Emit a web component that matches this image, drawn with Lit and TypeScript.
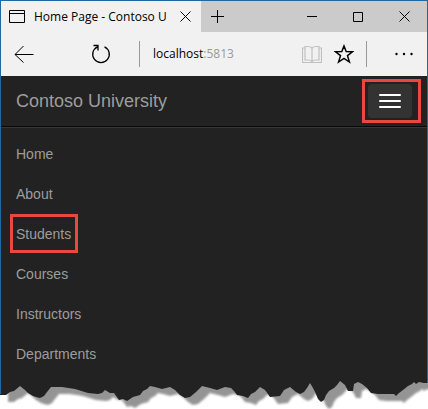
import { LitElement, html, css, svg } from "lit";
import { customElement } from "lit/decorators.js";

const LINKS = ["Home", "About", "Students", "Courses", "Instructors", "Departments"];

/** Browser chrome: tab strip and address bar. */
@customElement("browser-chrome")
export class BrowserChrome extends LitElement {
  static styles = css`
    :host {
      display: block;
      background: #f1f1f1;
      color: #000;
      font-family: "Open Sans", "Noto Sans", sans-serif;
    }
    button {
      display: grid;
      place-items: center;
      padding: 0;
      border: 0;
      background: none;
      color: inherit;
      flex: none;
    }
    svg {
      display: block;
      fill: none;
      stroke: currentColor;
    }
    .strip {
      display: flex;
      height: 31px;
      background: #cbcbcb;
    }
    .tab {
      display: flex;
      align-items: center;
      width: 200px;
      flex: none;
      box-sizing: border-box;
      padding-left: 8px;
      background: #f1f1f1;
    }
    .title {
      flex: 1;
      margin-left: 9px;
      white-space: nowrap;
      font-size: 12px;
      line-height: 20px;
    }
    .close {
      width: 32px;
      height: 31px;
    }
    .new {
      width: 34px;
    }
    .controls {
      display: flex;
      margin-left: auto;
    }
    .controls button {
      width: 46px;
    }
    .bar {
      display: flex;
      align-items: center;
      height: 44px;
    }
    .back {
      width: 46px;
      height: 44px;
    }
    .reload {
      width: 46px;
      height: 44px;
      margin-left: 31px;
    }
    .rule {
      width: 1px;
      height: 26px;
      flex: none;
      background: #999;
    }
    .left {
      margin-left: 15px;
    }
    .address {
      flex: 1;
      min-width: 0;
      padding-left: 13px;
      font-size: 12px;
      line-height: 20px;
      white-space: nowrap;
    }
    .port {
      color: #999;
    }
    .book,
    .star {
      width: 32px;
      height: 44px;
    }
    .book {
      color: #c0c0c0;
    }
    .right {
      margin-left: 6px;
    }
    .more {
      width: 46px;
      height: 44px;
      margin-left: 14px;
    }
    .more svg {
      fill: currentColor;
      stroke: none;
    }
  `;

  render() {
    return html`
      <div class="strip">
        <div class="tab">
          <svg width="16" height="13" viewBox="0 0 16 13">
            <path d="M.5.5h15v12H.5zM.5 3.5h15" />
          </svg>
          <span class="title">Home Page - Contoso U</span>
          <button class="close" aria-label="Close tab">
            <svg width="11" height="11" viewBox="0 0 11 11"><path d="M.5.5l10 10M10.5.5l-10 10" /></svg>
          </button>
        </div>
        <button class="new" aria-label="New tab">
          <svg width="14" height="13" viewBox="0 0 14 13"><path d="M0 6.5h13M6.5 0v13" /></svg>
        </button>
        <div class="controls">
          <button aria-label="Minimize">
            <svg width="10" height="10" viewBox="0 0 10 10"><path d="M0 4.5h10" /></svg>
          </button>
          <button aria-label="Maximize">
            <svg width="10" height="10" viewBox="0 0 10 10"><path d="M.5.5h9v9h-9z" /></svg>
          </button>
          <button aria-label="Close window">
            <svg width="11" height="11" viewBox="0 0 11 11"><path d="M.5.5l10 10M10.5.5l-10 10" /></svg>
          </button>
        </div>
      </div>
      <div class="bar">
        <button class="back" aria-label="Back">
          <svg width="20" height="18" viewBox="0 0 20 18"><path d="M1 9.500h18.500M9.500 1L1 9.500l8.500 8" /></svg>
        </button>
        <button class="reload" aria-label="Refresh">
          <svg width="20" height="20" viewBox="0 0 20 20" stroke-width="1.3">
            <path d="M13.500 2.800a8.300 8.300 0 1 1-7 0M2.500 1.500h4.500v5" />
          </svg>
        </button>
        <span class="rule left"></span>
        <span class="address">localhost<span class="port">:5813</span></span>
        <button class="book" aria-label="Reading view">
          <svg width="20" height="19" viewBox="0 0 20 19" stroke-width="1.2">
            <path d="M2.500 3H.5v14.500h19V3h-2M10 3v13.500M10 3Q8.500 1.500 6 1.500H3v13.500h3q2.500 0 4 1.500q1.500-1.500 4-1.500h3V1.500h-3Q11.500 1.500 10 3" />
          </svg>
        </button>
        <button class="star" aria-label="Add to favorites">
          <svg width="20" height="20" viewBox="0 0 20 20" stroke-width="1.5">
            <path d="M10 2l2.200 5.600 6.300.2-5 3.800 1.900 6.400L10 14.300 4.600 18l1.900-6.400-5-3.800 6.300-.2z" />
          </svg>
        </button>
        <span class="rule right"></span>
        <button class="more" aria-label="More">
          <svg width="18" height="4" viewBox="0 0 18 4">
            <circle cx="1.500" cy="2" r="1.200" /><circle cx="9" cy="2" r="1.200" /><circle cx="16.500" cy="2" r="1.200" />
          </svg>
        </button>
      </div>
    `;
  }
}

/** Collapsed site navigation with its menu opened. */
@customElement("site-nav")
export class SiteNav extends LitElement {
  static styles = css`
    :host {
      display: block;
      background: #222;
      font-family: "Liberation Sans", Arial, sans-serif;
    }
    a {
      color: #9d9d9d;
      text-decoration: none;
    }
    .header {
      display: flex;
      align-items: center;
      justify-content: space-between;
      height: 50px;
      padding: 0 6px 0 15px;
      border-bottom: 1px solid #090909;
    }
    .brand {
      font-size: 18px;
      line-height: 20px;
    }
    .mark {
      border: 3px solid #e8483f;
    }
    .toggler {
      padding: 2px 6px 2px 3px;
    }
    .toggle {
      display: flex;
      flex-direction: column;
      justify-content: center;
      align-items: center;
      gap: 4px;
      width: 44px;
      height: 34px;
      padding: 0;
      border: 0;
      border-radius: 4px;
      background: #333;
    }
    .line {
      width: 22px;
      height: 2px;
      border-radius: 1px;
      background: #fff;
    }
    ul {
      margin: 0;
      padding: 5px 9px;
      list-style: none;
      border-top: 1px solid #363636;
    }
    li {
      display: flex;
      align-items: center;
      height: 40px;
    }
    .link {
      padding: 7px 4px 6px 3px;
      border: 3px solid transparent;
      font-size: 14px;
      line-height: 20px;
    }
    .link.current {
      border-color: #e8483f;
    }
  `;

  render() {
    return html`
      <nav>
        <div class="header">
          <a class="brand" href="#">Contoso University</a>
          <div class="mark toggler">
            <button class="toggle" aria-label="Toggle navigation">
              <span class="line"></span><span class="line"></span><span class="line"></span>
            </button>
          </div>
        </div>
        <ul>
          ${LINKS.map(
            (name) => html`<li>
              <a class=${name === "Students" ? "link current" : "link"} href="#">${name}</a>
            </li>`
          )}
        </ul>
      </nav>
    `;
  }
}

const EDGE =
  "L428 5 424 5 419 4 416 6 414 4 412 6 408 8 403 12 399 15 396 18 394 16 378 16 371 15 367 10 362 6 358 4 354 6 353 13 348 13 345 7 340 3 337 7 334 10 329 13 326 17 324 22 321 24 318 21 315 14 313 10 310 5 307 10 304 14 300 16 296 14 290 9 284 12 280 18 270 19 265 12 260 9 255 14 251 16 248 20 243 18 237 17 234 13 231 10 225 9 217 12 210 10 202 8 196 14 190 19 185 20 180 17 175 12 170 9 162 11 155 9 150 8 147 11 143 13 140 17 133 19 127 23 123 21 119 22 114 15 110 15 105 12 102 15 98 16 88 15 75 11 62 9 51 9 47 14 44 18 40 20 36 19 33 18 28 15 25 12 20 8 14 13 10 14 6 17 0 17Z";

/** Ragged lower edge of the window, with its shadow. */
@customElement("torn-edge")
export class TornEdge extends LitElement {
  static styles = css`
    :host {
      display: block;
    }
    svg {
      display: block;
      width: 100%;
      height: 31px;
    }
    .shadow {
      fill: #949494;
    }
    .paper {
      fill: #222;
    }
    .side {
      fill: #1c69a8;
    }
  `;

  render() {
    return html`
      <svg viewBox="0 0 428 31" preserveAspectRatio="none" aria-hidden="true">
        ${svg`
          <defs>
            <filter id="soft" x="-5%" y="-20%" width="110%" height="150%">
              <feGaussianBlur stdDeviation="1.200" />
            </filter>
          </defs>
          <path class="shadow" filter="url(#soft)" transform="translate(8 7)" d="M0 -8H440V5${EDGE}" />
          <path class="paper" d="M0 0H428${EDGE}" />
          <path class="side" d="M0 0h1v16h-1zM427 0h1v5h-1z" />
        `}
      </svg>
    `;
  }
}

@customElement("app-root")
export class AppRoot extends LitElement {
  static styles = css`
    :host {
      display: block;
      background: #fff;
    }
    .window {
      border: 1px solid #1c69a8;
      border-bottom: 0;
    }
  `;

  render() {
    return html`
      <div class="window">
        <browser-chrome></browser-chrome>
        <site-nav></site-nav>
      </div>
      <torn-edge></torn-edge>
    `;
  }
}
